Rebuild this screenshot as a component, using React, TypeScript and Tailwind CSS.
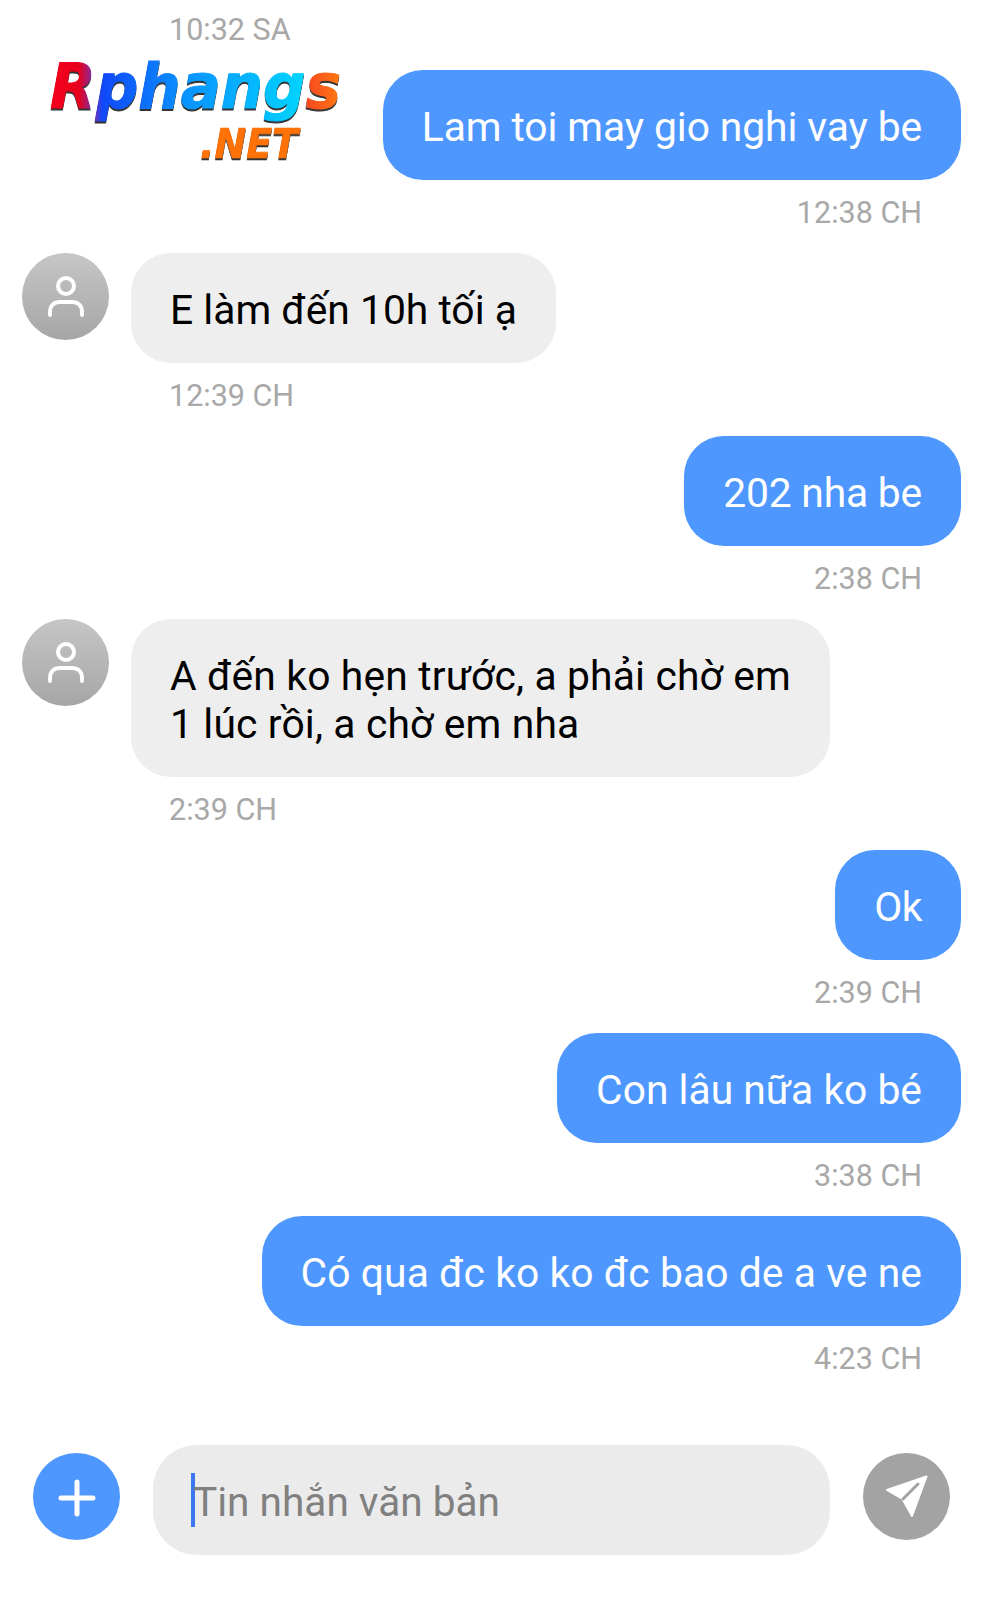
import React from 'react';

const font = { fontFamily: 'Roboto, "Noto Sans", sans-serif' };

type Msg = { side: 'in' | 'out'; text: React.ReactNode; time: string; track?: string };

const messages: Msg[] = [
  { side: 'out', text: 'Lam toi may gio nghi vay be', time: '12:38 CH', track: 'tracking-[-0.1px]' },
  { side: 'in', text: 'E làm đến 10h tối ạ', time: '12:39 CH' },
  { side: 'out', text: '202 nha be', time: '2:38 CH', track: 'tracking-[-0.2px]' },
  { side: 'in', text: <>A đến ko hẹn trước, a phải chờ em<br />1 lúc rồi, a chờ em nha</>, time: '2:39 CH', track: 'tracking-[0.15px]' },
  { side: 'out', text: 'Ok', time: '2:39 CH', track: 'tracking-[-0.5px]' },
  { side: 'out', text: 'Con lâu nữa ko bé', time: '3:38 CH' },
  { side: 'out', text: 'Có qua đc ko ko đc bao de a ve ne', time: '4:23 CH', track: 'tracking-[0.08px]' },
];

function Avatar() {
  return (
    <div className="w-[87px] h-[87px] rounded-full shrink-0 flex items-center justify-center bg-gradient-to-b from-[#c6c6c6] to-[#a6a6a6]">
      <svg width="40" height="44" viewBox="0 0 40 44" fill="none" stroke="white" strokeWidth="4" strokeLinecap="round">
        <circle cx="20" cy="11" r="8" />
        <path d="M4 40v-3c0-6 4-10 10-10h12c6 0 10 4 10 10v3" />
      </svg>
    </div>
  );
}

function Logo() {
  return (
    <svg className="absolute left-[44px] top-[40px] drop-shadow-[0_2px_0_#333]" width="340" height="134" viewBox="0 0 340 134">
      <defs>
        <linearGradient id="lg" x1="0" x2="1" y1="0" y2="0">
          <stop offset="0" stopColor="#f5001c" />
          <stop offset="0.1" stopColor="#e8001c" />
          <stop offset="0.15" stopColor="#7a30b0" />
          <stop offset="0.18" stopColor="#1048f8" />
          <stop offset="0.45" stopColor="#0a90ff" />
          <stop offset="0.87" stopColor="#00d4ff" />
          <stop offset="0.885" stopColor="#f84a20" />
          <stop offset="1" stopColor="#ff7a10" />
        </linearGradient>
      </defs>
      <text x="6" y="68" fill="url(#lg)" stroke="url(#lg)" strokeWidth="1" fontFamily="DejaVu Sans" fontStyle="italic" fontWeight="700" fontSize="63" textLength="291" lengthAdjust="spacingAndGlyphs">Rphangs</text>
      <text x="156" y="118" fill="#ff7208" stroke="#ff7208" strokeWidth="0.6" fontFamily="DejaVu Sans" fontStyle="italic" fontWeight="700" fontSize="41" textLength="98" lengthAdjust="spacingAndGlyphs">.NET</text>
    </svg>
  );
}

export default function App() {
  return (
    <div className="relative w-[983px] h-[1600px] bg-white overflow-hidden flex flex-col" style={font}>
      <Logo />
      <div className="h-[70px] pl-[169px] pt-[15px] text-[30.5px] leading-[30px] text-[#a8a8a8]">10:32 SA</div>

      <div className="flex flex-col">
        {messages.map((m, i) =>
          m.side === 'out' ? (
            <div key={i} className="flex flex-col items-end pr-[22px] h-[183px]">
              <div className={'h-[110px] rounded-[40px] bg-[#4e97ff] text-white px-[39px] pt-[4px] flex items-center text-[40.8px] leading-[48px] ' + (m.track ?? '')}>{m.text}</div>
              <div className="mr-[39px] mt-[18px] text-[30.5px] leading-[30px] text-[#a8a8a8]">{m.time}</div>
            </div>
          ) : (
            <div key={i} className={'flex gap-[22px] pl-[22px] ' + (typeof m.text === 'string' ? 'h-[183px]' : 'h-[231px]')}>
              <Avatar />
              <div className="flex flex-col items-start">
                <div className={'rounded-[40px] bg-[#eeeeee] text-black px-[39px] pt-[4px] flex items-center text-[40.8px] leading-[48px] ' + (m.track ?? '') + ' ' + (typeof m.text === 'string' ? 'h-[110px]' : 'h-[158px]')}>
                  <div>{m.text}</div>
                </div>
                <div className="ml-[38px] mt-[18px] text-[30.5px] leading-[30px] text-[#a8a8a8]">{m.time}</div>
              </div>
            </div>
          )
        )}
      </div>

      <div className="mt-[-1px] pt-[47px] flex items-start pl-[33px]">
        <div className="w-[87px] h-[87px] mt-[8px] rounded-full bg-[#4e97ff] flex items-center justify-center shrink-0">
          <svg className="mt-[2px]" width="38" height="38" viewBox="0 0 38 38" stroke="white" strokeWidth="5" strokeLinecap="round">
            <path d="M19 3v32M3 19h32" />
          </svg>
        </div>
        <div className="ml-[33px] w-[677px] h-[110px] rounded-[44px] bg-[#ebebeb] flex items-center pl-[38px] shrink-0">
          <div className="relative flex items-center text-[40.6px] leading-[48px] text-[#808080]">
            <span className="w-[4px] h-[54px] bg-[#3b78f0] shrink-0" />
            <span className="-ml-[2px] relative top-[2px]">Tin nhắn văn bản</span>
          </div>
        </div>
        <div className="ml-[33px] w-[87px] h-[87px] mt-[8px] rounded-full bg-[#a3a3a3] flex items-center justify-center shrink-0">
          <svg width="42" height="43" viewBox="0 0 42 43" fill="none">
            <path d="M40.500 1.500L1 15l15.500 9L26 41z" fill="white" stroke="white" strokeWidth="2" strokeLinejoin="round" />
            <path d="M17 24L32 9" stroke="#a3a3a3" strokeWidth="3" strokeLinecap="round" />
          </svg>
        </div>
      </div>
    </div>
  );
}
